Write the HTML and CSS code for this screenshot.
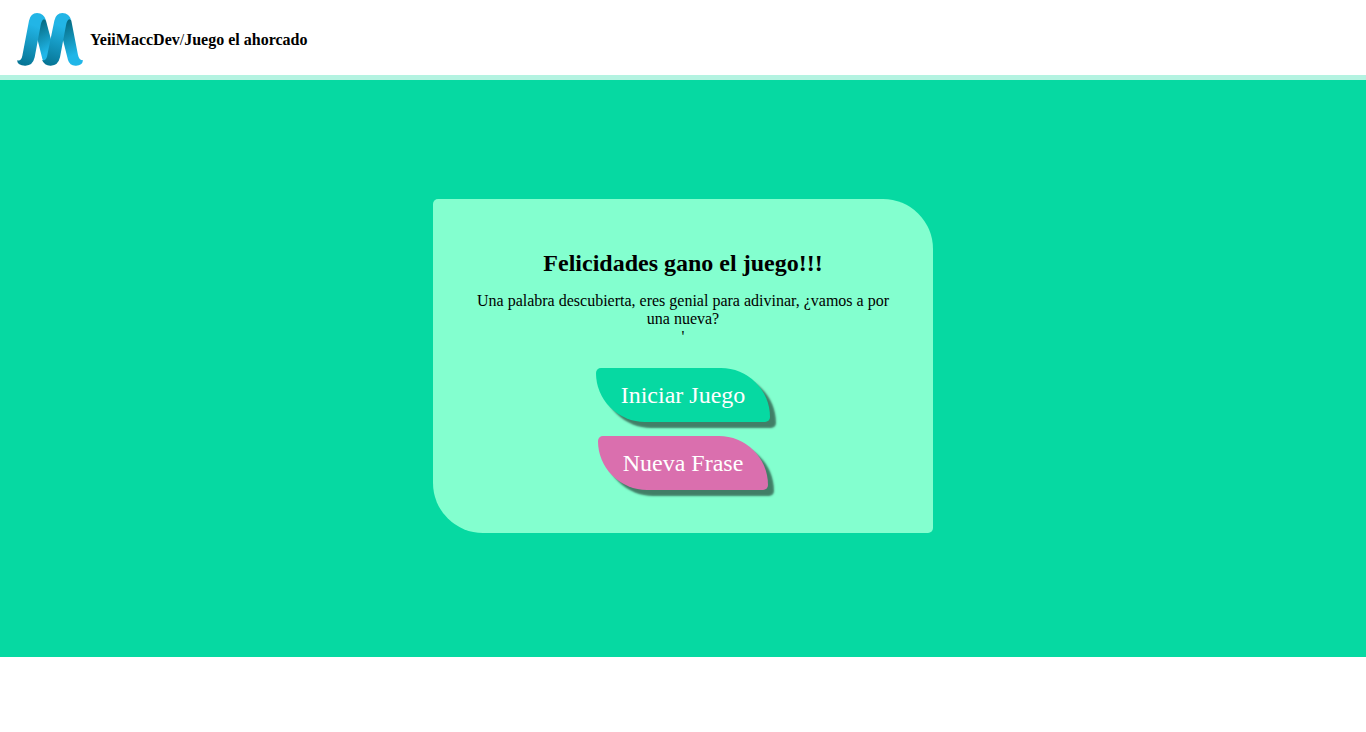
FILE: index.html
```html
<!DOCTYPE html>
<html lang="es">
<head>
  <meta charset="utf-8">
  <meta name="viewport" content="width=device-width, initial-scale=1">
  <title>Juego el ahorcado</title>
  <link rel="stylesheet" href="styles.css">
</head>
<body>
  <header class="header">
    <svg class="logo" viewBox="51 39 198 159" aria-hidden="true">
      <defs>
        <linearGradient id="front" x1="0.2" y1="0" x2="0" y2="1">
          <stop offset="0.15" stop-color="#22b5e6"/>
          <stop offset="1" stop-color="#04708f"/>
        </linearGradient>
        <linearGradient id="back" x1="0" y1="0" x2="0.2" y2="1">
          <stop offset="0.05" stop-color="#04667c"/>
          <stop offset="0.85" stop-color="#20b6e8"/>
        </linearGradient>
      </defs>
      <path fill="url(#back)" d="M117 78C121 58 131 50 138 62L156 130L143 190Q130 188 127 176L112 116Z"/>
      <path fill="url(#front)" d="M51 181C60 184 65 178 67 167L87 62Q92 39 111 39Q132 40 138 61C130 53 125 61 122 76L104 172Q98 198 75 197Q53 197 51 181Z"/>
      <path fill="url(#back)" d="M193 78C197 58 207 50 214 62L234 165Q237 181 249 181Q247 198 226 197Q209 197 204 180L188 116Z"/>
      <path fill="url(#front)" d="M126 180C136 184 141 176 143 160L163 62Q168 39 187 39Q208 40 214 61C206 53 201 61 198 76L180 172Q174 198 151 197Q133 197 126 180Z"/>
    </svg>
    <p class="brand"><a class="link" href="#">YeiiMaccDev</a>/<a class="link" href="#">Juego el ahorcado</a></p>
  </header>
  <main class="main">
    <section class="card">
      <h1 class="title">Felicidades gano el juego!!!</h1>
      <p class="message">Una palabra descubierta, eres genial para adivinar, ¿vamos a por una nueva?<br>'</p>
      <div class="actions">
        <button class="button" type="button">Iniciar Juego</button>
        <button class="button button-alt" type="button">Nueva Frase</button>
      </div>
    </section>
  </main>
</body>
</html>
```
FILE: styles.css
```css
* {
  box-sizing: border-box;
  margin: 0;
  padding: 0;
}

body {
  background: #fff;
  color: #000;
  font: 16px/18px "Liberation Serif", "Times New Roman", serif;
}

.header {
  display: flex;
  align-items: center;
  gap: 7px;
  min-height: 80px;
  padding: 4px 17px 0;
  border-bottom: 5px solid #b4f3e1;
}

.logo {
  width: 66px;
  height: 53px;
}

.link {
  color: inherit;
  font-weight: bold;
  text-decoration: none;
}

.main {
  display: flex;
  align-items: center;
  justify-content: center;
  min-height: 577px;
  padding: 20px 20px 25px;
  background: #06d9a2;
}

.card {
  width: 100%;
  max-width: 500px;
  padding: 51px 40px 43px;
  border-radius: 5px 50px;
  background: #83ffcf;
  text-align: center;
}

.title {
  margin-bottom: 15px;
  font-size: 24px;
  line-height: 27px;
}

.message {
  margin-bottom: 22px;
}

.actions {
  display: flex;
  flex-direction: column;
  align-items: center;
  gap: 14px;
}

.button {
  padding: 14px 25px 13px;
  border: 0;
  border-radius: 5px 50px;
  background: #06d9a2;
  box-shadow: 6px 6px 2px rgba(0, 0, 0, 0.5);
  color: #fff;
  font: 24px/27px "Liberation Serif", "Times New Roman", serif;
  cursor: pointer;
}

.button-alt {
  background: #da6fae;
}
```
